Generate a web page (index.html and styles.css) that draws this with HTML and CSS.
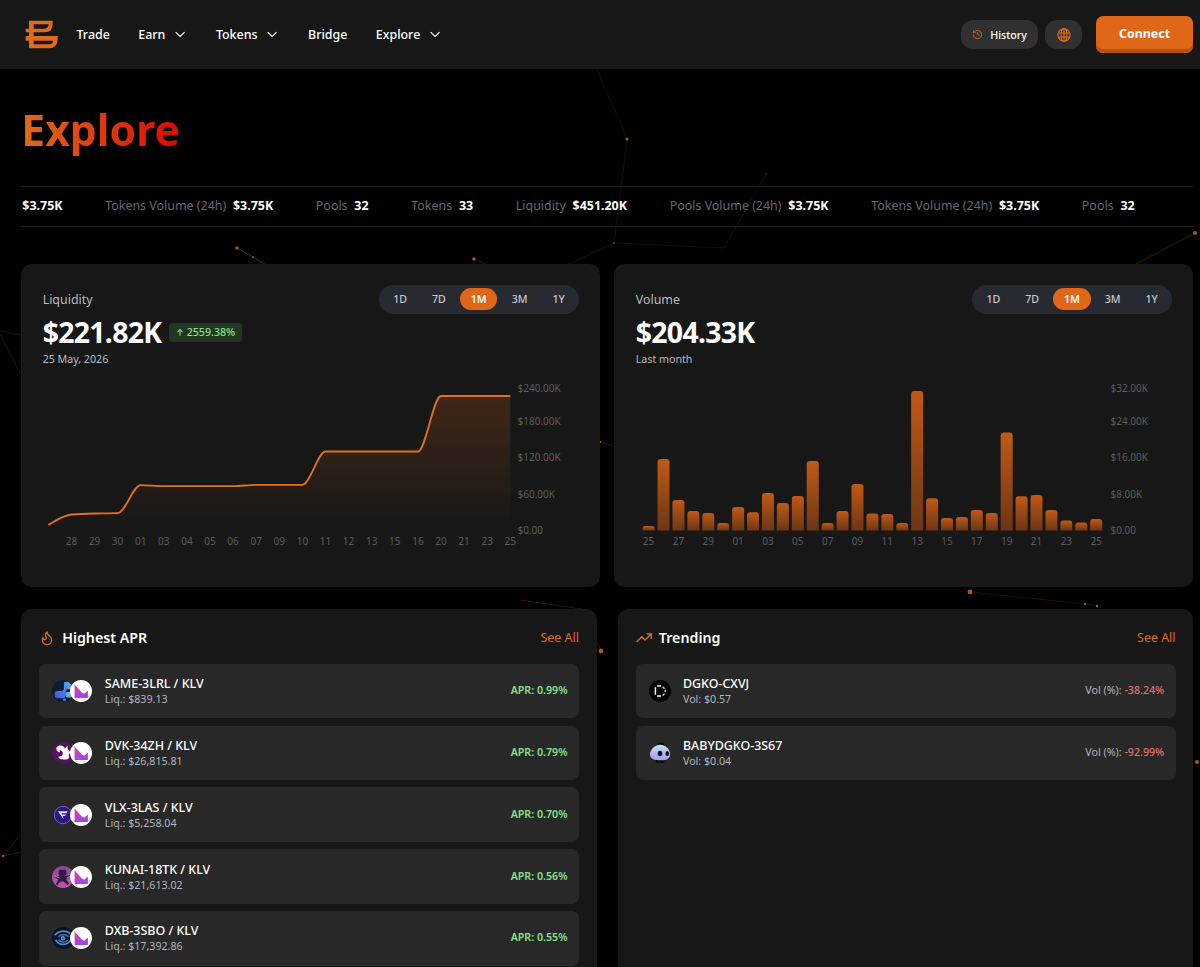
FILE: index.html
```
<!DOCTYPE html>
<html lang="en">
  <head>
    <meta charset="UTF-8" />
    <meta name="viewport" content="width=device-width, initial-scale=1.0" />
    <title>Explore</title>
    <link rel="stylesheet" href="styles.css">
  </head>
  <body>
    <!-- particle network behind the page -->
    <svg class="particles" viewBox="0 0 1200 967" aria-hidden="true">
      <g stroke="#e06a1b" stroke-width="1">
        <path d="M597 69L627 139" opacity=".1" />
        <path d="M627 139L614 243L724 248L766 174" opacity=".12" fill="none" />
        <path d="M237 248L265 264" opacity=".4" />
        <path d="M614 243L560 268" opacity=".12" />
        <path d="M474 259L486 264" opacity=".2" />
        <path d="M1195 233L1136 264" opacity=".25" />
        <path d="M0 331L22 335M0 334L22 378" opacity=".15" />
        <path d="M600 442L616 447" opacity=".2" />
        <path d="M520 600L582 609L601 651" opacity=".2" fill="none" />
        <path d="M970 592L1085 604L1097 606" opacity=".15" fill="none" />
        <path d="M3 856L22 833M3 856L22 852" opacity=".2" />
      </g>
      <g fill="#a9551f">
        <circle cx="627" cy="139" r="1.6" />
        <circle cx="766" cy="174" r=".8" opacity=".5" />
        <circle cx="614" cy="243" r="1" opacity=".5" />
        <circle cx="237" cy="248" r="1.8" />
        <circle cx="253" cy="257" r="1" />
        <circle cx="474" cy="259" r="1.8" />
        <circle cx="1195" cy="233" r="2" />
        <circle cx="600" cy="442" r="1.2" />
        <circle cx="601" cy="651" r="2.4" />
        <circle cx="970" cy="592" r="2.4" />
        <circle cx="1085" cy="604" r="1.2" />
        <circle cx="1097" cy="606" r="1.2" />
        <circle cx="3" cy="856" r="1.3" />
        <circle cx="1197" cy="762" r="2" />
      </g>
    </svg>

    <!-- shared icons -->
    <svg width="0" height="0" class="defs">
      <defs>
        <linearGradient id="klv-fill" x1="0" y1="0" x2="0.4" y2="1">
          <stop offset="0" stop-color="#e6408c" />
          <stop offset="1" stop-color="#a045ee" />
        </linearGradient>
        <linearGradient id="same-fill" x1="1" y1="0" x2="0" y2="1">
          <stop offset="0" stop-color="#53b4ea" />
          <stop offset="1" stop-color="#5048e8" />
        </linearGradient>
        <linearGradient id="kunai-fill" x1="0" y1="0" x2="0" y2="1">
          <stop offset="0" stop-color="#8b4797" />
          <stop offset="1" stop-color="#c553ad" />
        </linearGradient>
        <linearGradient id="baby-fill" x1="0" y1="0" x2="0" y2="1">
          <stop offset="0" stop-color="#bfe4ec" />
          <stop offset="1" stop-color="#a89be6" />
        </linearGradient>
        <linearGradient id="area-fill" x1="0" y1="0" x2="0" y2="1">
          <stop offset="0" stop-color="#e3671a" stop-opacity=".2" />
          <stop offset="1" stop-color="#e3671a" stop-opacity="0" />
        </linearGradient>
        <linearGradient id="bar-fill" x1="0" y1="0" x2="0" y2="1">
          <stop offset="0" stop-color="#c25915" />
          <stop offset="1" stop-color="#6c3614" />
        </linearGradient>
      </defs>
      <symbol id="chevron" viewBox="0 0 16 16">
        <path d="M3 5.8l5 4.8 5-4.8" fill="none" stroke="#fff" stroke-width="1.3" />
      </symbol>
      <symbol id="klv" viewBox="0 0 24 24">
        <circle cx="12" cy="12" r="12" fill="#fff" />
        <path d="M5 5L13 13.6L15.5 15L19.5 11.5V19.5H5Z" fill="url(#klv-fill)" />
      </symbol>
    </svg>

    <header class="navbar">
      <svg class="logo" viewBox="0 0 99 87">
        <path fill="#e06a1b" fill-rule="evenodd" d="M12 2H83V10C83 27 76 37 60 37H26V48H98V55C98 74 90 85 73 85H12V62H2V48H12V37H2V26H12ZM26 13V26H58C67 26 71 20 71 13ZM26 62V73H71C79 73 84 69 85 62Z" />
      </svg>
      <nav class="menu">
        <a>Trade</a>
        <a>Earn <svg class="chevron"><use href="#chevron" /></svg></a>
        <a>Tokens <svg class="chevron"><use href="#chevron" /></svg></a>
        <a>Bridge</a>
        <a>Explore <svg class="chevron"><use href="#chevron" /></svg></a>
      </nav>
      <div class="actions">
        <button class="pill history">
          <svg viewBox="0 0 24 24" class="icon">
            <path d="M3 12a9 9 0 1 0 9-9 9.75 9.75 0 0 0-6.74 2.74L3 8M3 3v5h5M12 7v5l4 2" />
          </svg>
          History
        </button>
        <button class="pill language" aria-label="Language">
          <svg viewBox="0 0 24 24" class="icon">
            <circle cx="12" cy="12" r="10.5" />
            <ellipse cx="12" cy="12" rx="5" ry="10.5" />
            <path d="M12 1.5v21M2.5 8.5h19M2.5 15.5h19" />
          </svg>
        </button>
        <button class="connect">Connect</button>
      </div>
    </header>

    <main>
      <h1>Explore</h1>

      <div class="ticker">
        <div><b>$3.75K</b></div>
        <div>Tokens Volume (24h) <b>$3.75K</b></div>
        <div>Pools <b>32</b></div>
        <div>Tokens <b>33</b></div>
        <div>Liquidity <b>$451.20K</b></div>
        <div>Pools Volume (24h) <b>$3.75K</b></div>
        <div>Tokens Volume (24h) <b>$3.75K</b></div>
        <div>Pools <b>32</b></div>
      </div>

      <section class="charts">
        <div class="card chart-card">
          <div class="chart-head">
            <div>
              <div class="label">Liquidity</div>
              <div class="total">
                $221.82K
                <span class="badge">
                  <svg viewBox="0 0 10 10"><path d="M5 9V1.2M1.8 4.4L5 1.2l3.2 3.2" /></svg>
                  2559.38%
                </span>
              </div>
              <div class="period">25 May, 2026</div>
            </div>
            <div class="range">
              <span>1D</span><span>7D</span><span class="active">1M</span><span>3M</span><span>1Y</span>
            </div>
          </div>
          <svg class="chart" id="liquidity-chart" viewBox="0 0 536 180"></svg>
        </div>

        <div class="card chart-card">
          <div class="chart-head">
            <div>
              <div class="label">Volume</div>
              <div class="total">$204.33K</div>
              <div class="period">Last month</div>
            </div>
            <div class="range">
              <span>1D</span><span>7D</span><span class="active">1M</span><span>3M</span><span>1Y</span>
            </div>
          </div>
          <svg class="chart" id="volume-chart" viewBox="0 0 536 180"></svg>
        </div>
      </section>

      <section class="lists">
        <div class="card list-card">
          <div class="list-head">
            <h2>
              <svg viewBox="0 0 24 24" class="icon flame">
                <path d="M8.5 14.5A2.5 2.5 0 0 0 11 12c0-1.38-.5-2-1-3-1.072-2.143-.224-4.054 2-6 .5 2.5 2 4.9 4 6.5 2 1.6 3 3.5 3 5.5a7 7 0 1 1-14 0c0-1.153.433-2.294 1-3a2.5 2.5 0 0 0 2.5 2.5z" />
              </svg>
              Highest APR
            </h2>
            <a>See All</a>
          </div>
          <div class="row">
            <div class="pair">
              <svg viewBox="0 0 24 24">
                <circle cx="12" cy="12" r="12" fill="#0c1c30" />
                <path d="M13 4q0-2 2-2h2q5 2 5 7v1h-5q-2 0-2 2v3q0 5-4 5H6q-3 0-3-3v-3q0-2 3-2h4q3 0 3-3z" fill="url(#same-fill)" />
                <rect x="15" y="13" width="7" height="6" rx="1.5" fill="#58b0e8" />
                <circle cx="13.5" cy="21.5" r="1.7" fill="#3f7fd8" />
              </svg>
              <svg><use href="#klv" /></svg>
            </div>
            <div class="info"><b>SAME-3LRL / KLV</b><small>Liq.: $839.13</small></div>
            <span class="apr">APR: 0.99%</span>
          </div>
          <div class="row">
            <div class="pair">
              <svg viewBox="0 0 24 24">
                <circle cx="12" cy="12" r="12" fill="#561060" />
                <path d="M5 9C3 3 13 2 14 7l3-3v4c3 1 2 3 3 4l-2 2c2 3 0 6-5 5-4 0-6-1-6-3l4-1c2-3 0-6-3-6 2 2 0 4-3 0z" fill="#fff" />
              </svg>
              <svg><use href="#klv" /></svg>
            </div>
            <div class="info"><b>DVK-34ZH / KLV</b><small>Liq.: $26,815.81</small></div>
            <span class="apr">APR: 0.79%</span>
          </div>
          <div class="row">
            <div class="pair">
              <svg viewBox="0 0 24 24">
                <circle cx="12" cy="12" r="9.5" fill="#32128a" stroke="#776abf" />
                <path d="M6.5 8H17l-1.2 2h-5.3l.6 1.5h4.2L14.2 13h-2.4l.7 3.5z" fill="#e5dcff" />
              </svg>
              <svg><use href="#klv" /></svg>
            </div>
            <div class="info"><b>VLX-3LAS / KLV</b><small>Liq.: $5,258.04</small></div>
            <span class="apr">APR: 0.70%</span>
          </div>
          <div class="row">
            <div class="pair">
              <svg viewBox="0 0 24 24">
                <circle cx="12" cy="12" r="12" fill="url(#kunai-fill)" />
                <path d="M8 4h7l1 5-2 2 5-1 2 1-5 3v2l3 3-2 2-4-4H9l-3 4-2-1 3-5-4-3 5-1-1-3z" fill="#30183e" />
                <path d="M3 11l5 2M16 13l6-3" stroke="#f06bb4" stroke-width="1" />
              </svg>
              <svg><use href="#klv" /></svg>
            </div>
            <div class="info"><b>KUNAI-18TK / KLV</b><small>Liq.: $21,613.02</small></div>
            <span class="apr">APR: 0.56%</span>
          </div>
          <div class="row">
            <div class="pair">
              <svg viewBox="0 0 24 24">
                <circle cx="12" cy="12" r="12" fill="#0a1428" />
                <g fill="none" stroke="#4f8fce" stroke-width="1.8">
                  <path d="M3 9c4-5 11-6 17-2M4 14c3 6 11 7 16 1" />
                  <path d="M7 11c3-4 9-3 11 0M7 14c3 4 8 3 10 0" stroke="#3a6fab" />
                  <circle cx="12" cy="12.3" r="1.5" />
                </g>
              </svg>
              <svg><use href="#klv" /></svg>
            </div>
            <div class="info"><b>DXB-3SBO / KLV</b><small>Liq.: $17,392.86</small></div>
            <span class="apr">APR: 0.55%</span>
          </div>
        </div>

        <div class="card list-card">
          <div class="list-head">
            <h2>
              <svg viewBox="0 0 24 24" class="icon trend">
                <path d="M1 18l7.5-8 5 5L22.500 6.500M16 6h7v7" />
              </svg>
              Trending
            </h2>
            <a>See All</a>
          </div>
          <div class="row">
            <svg class="token" viewBox="0 0 24 24">
              <circle cx="12" cy="12" r="12" fill="#000" />
              <path d="M7 8v8M9 6.500h4M9 17.500h4" stroke="#fff" stroke-width="1.600" />
              <path d="M15 7.500l2 2M17.800 11v2M17 15l-2 2" stroke="#ddd" stroke-width="1.500" />
            </svg>
            <div class="info"><b>DGKO-CXVJ</b><small>Vol: $0.57</small></div>
            <span class="vol">Vol (%): <b>-38.24%</b></span>
          </div>
          <div class="row">
            <svg class="token" viewBox="0 0 24 24">
              <ellipse cx="13" cy="3" rx="4" ry="2.500" fill="#0b0b12" />
              <path d="M7 19h11l-2 4h-3l-1-2-1 2H8z" fill="#08080e" />
              <path d="M12 3C18 3 23 8 23 13.500S18 20 12 20 1 18 1 13.500 6 3 12 3z" fill="url(#baby-fill)" />
              <ellipse cx="12" cy="12.500" rx="2.500" ry="3" fill="#0c0a2c" />
              <ellipse cx="20" cy="12.500" rx="2" ry="2.800" fill="#0c0a2c" />
            </svg>
            <div class="info"><b>BABYDGKO-3S67</b><small>Vol: $0.04</small></div>
            <span class="vol">Vol (%): <b>-92.99%</b></span>
          </div>
        </div>
      </section>
    </main>

    <script>
      const BASE = 155.5; // y of the zero line

      function label(x, y, text, anchor) {
        return `<text x="${x}" y="${y}" text-anchor="${anchor}">${text}</text>`;
      }

      function yAxis(labels) {
        const rows = [16.5, 50, 86.3, 122.6, 159];
        return labels.map((t, i) => label(474.5, rows[i], t, 'start')).join('');
      }

      function drawLiquidity() {
        const ys = [150, 139.5, 138.5, 138.2, 110.2, 111.2, 111.2, 111.2, 111.2, 109.8, 109.8,
          109.8, 76.5, 76.5, 76.5, 76.5, 76.5, 21, 21, 21, 21];
        const days = ['28', '29', '30', '01', '03', '04', '05', '06', '07', '09', '10', '11',
          '12', '13', '15', '16', '20', '21', '23', '25'];
        const step = 23.1;
        const start = 5.3;

        // monotone curve: flat tangents everywhere except on a steady slope
        const slope = ys.map((y, i) => {
          if (i === 0) return (ys[1] - y) / step * 1.3;
          if (i === ys.length - 1) return 0;
          const a = (y - ys[i - 1]) / step;
          const b = (ys[i + 1] - y) / step;
          return a * b <= 0 ? 0 : 2 * a * b / (a + b);
        });
        let line = `M${start} ${ys[0]}`;
        for (let i = 1; i < ys.length; i++) {
          const x0 = start + (i - 1) * step;
          const x1 = x0 + step;
          const k = step / 3;
          line += `C${x0 + k} ${ys[i - 1] + slope[i - 1] * k} ${x1 - k} ${ys[i] - slope[i] * k} ${x1} ${ys[i]}`;
        }
        const end = start + step * (ys.length - 1);
        document.getElementById('liquidity-chart').innerHTML =
          `<path d="${line}V${BASE}H${start}Z" fill="url(#area-fill)" />` +
          `<path d="${line}" fill="none" stroke="#e27023" stroke-width="1.8" />` +
          days.map((d, i) => label(start + (i + 1) * step, 170, d, 'middle')).join('') +
          yAxis(['$240.00K', '$180.00K', '$120.00K', '$60.00K', '$0.00']) +
          `<title>${end ? 'Liquidity' : ''}</title>`;
      }

      function drawVolume() {
        const heights = [4.5, 71.5, 30.5, 19.5, 17.5, 7.5, 23.5, 18.3, 37.5, 27.5, 34.5, 69.5,
          7.5, 19.5, 46.5, 17, 16.5, 7.5, 139.5, 32.3, 12.5, 13.5, 20.5, 17.5, 98,
          34.3, 35.5, 20.5, 10, 8, 11.5];
        const days = ['25', '27', '29', '01', '03', '05', '07', '09', '11', '13', '15', '17',
          '19', '21', '23', '25'];
        const step = 14.92;
        const w = 12;
        document.getElementById('volume-chart').innerHTML =
          heights.map((h, i) => {
            const x = 6.6 + i * step;
            const r = Math.min(3, h / 2);
            return `<path fill="url(#bar-fill)" d="M${x} ${BASE}v${r - h}q0 ${-r} ${r} ${-r}h${w - 2 * r}q${r} 0 ${r} ${r}V${BASE}Z" />`;
          }).join('') +
          days.map((d, i) => label(12.6 + i * step * 2, 170, d, 'middle')).join('') +
          yAxis(['$32.00K', '$24.00K', '$16.00K', '$8.00K', '$0.00']);
      }

      drawLiquidity();
      drawVolume();
    </script>
  </body>
</html>
```

FILE: styles.css
```
html {
  font-size: 14.22px;
}
* {
  box-sizing: border-box;
}
body {
  margin: 0;
  height: 967px;
  overflow: hidden;
  background: #000;
  color: #fff;
  font-family: "Noto Sans", sans-serif;
  font-size: 0.875rem;
  line-height: 1.25rem;
}
svg {
  flex: none;
}
.defs {
  position: absolute;
}
.particles {
  position: absolute;
  top: 0;
  left: 0;
  width: 1200px;
  height: 967px;
  z-index: -1;
}
.icon {
  fill: none;
  stroke: #e06a1b;
  stroke-width: 2;
}

/* header */
.navbar {
  display: flex;
  align-items: center;
  height: 69px;
  padding: 0 7px 0 25px;
  background: #171717;
}
.logo {
  width: 33px;
  height: 29px;
}
.menu {
  display: flex;
  gap: 2rem;
  margin-left: 18.5px;
  font-weight: 500;
}
.menu a {
  display: flex;
  align-items: center;
  gap: 0.55rem;
}
.chevron {
  width: 1rem;
  height: 1rem;
}
.actions {
  display: flex;
  align-items: center;
  margin-left: auto;
}
.pill {
  display: flex;
  align-items: center;
  justify-content: center;
  gap: 0.5rem;
  height: 29px;
  border: 0;
  border-radius: 12px;
  background: #303030;
  color: #fff;
  font: 500 0.75rem "Noto Sans", sans-serif;
}
.history {
  width: 77px;
  margin-right: 7px;
}
.history .icon {
  width: 11px;
  height: 11px;
}
.language {
  width: 37px;
  margin-right: 14px;
}
.language .icon {
  width: 14px;
  height: 14px;
}
.connect {
  width: 97px;
  height: 37px;
  padding: 0 0 3px;
  border: 0;
  border-radius: 7px;
  background: #e06718;
  box-shadow: inset 0 -4px 0 #b35213;
  color: #fff;
  font: 700 0.875rem "Noto Sans", sans-serif;
}

main {
  padding: 0 6.7px 0 21.3px;
}
h1 {
  width: fit-content;
  margin: 30px 0 26.500px;
  background: linear-gradient(90deg, #e06a1b, #dc0a00);
  background-clip: text;
  -webkit-background-clip: text;
  color: transparent;
  font-size: 3rem;
  line-height: 60px;
}

/* stats strip */
.ticker {
  display: flex;
  align-items: center;
  gap: 3rem;
  height: 41.500px;
  padding-left: 1px;
  border-top: 1px solid #1c1c1c;
  border-bottom: 1px solid #1c1c1c;
  overflow: hidden;
  color: #656575;
  white-space: nowrap;
}
.ticker b {
  margin-left: 0.25rem;
  color: #fff;
}
.ticker div:first-child b {
  margin-left: 0;
}

.card {
  border-radius: 10.5px;
  background: #171717;
}

/* charts */
.charts {
  display: grid;
  grid-template-columns: 1fr 1fr;
  gap: 1rem;
  margin-top: 36.5px;
}
.chart-card {
  height: 323.5px;
  padding: 1.5rem;
}
.chart-head {
  display: flex;
  justify-content: space-between;
  align-items: flex-start;
}
.label {
  margin-top: 6px;
  color: #b9b9c0;
}
.total {
  display: flex;
  align-items: center;
  gap: 0.5rem;
  margin-top: 6px;
  font-size: 2rem;
  font-weight: 700;
  line-height: 2.5rem;
  letter-spacing: -0.025em;
}
.badge {
  display: flex;
  align-items: center;
  gap: 3px;
  padding: 0 0.5rem;
  border-radius: 4px;
  background: #233523;
  color: #86e08a;
  font-size: 0.75rem;
  font-weight: 500;
  line-height: 19px;
  letter-spacing: 0;
}
.badge svg {
  width: 8px;
  height: 9px;
  fill: none;
  stroke: currentColor;
  stroke-width: 1.3;
}
.period {
  margin-top: 1px;
  color: #b9b9c0;
  font-size: 0.75rem;
}
.range {
  display: flex;
  gap: 0.25rem;
  padding: 3.5px;
  border-radius: 15px;
  background: #282a32;
  color: #c6c6cc;
  font-size: 0.75rem;
  font-weight: 500;
  line-height: 22px;
}
.range span {
  padding: 0 0.75rem;
  border-radius: 11px;
}
.range .active {
  background: #e06718;
  color: #fff;
  font-weight: 600;
}
.chart {
  display: block;
  width: 536px;
  height: 180px;
  margin-top: 6px;
}
.chart text {
  fill: #5c5c5c;
  font-size: 10px;
}

/* lists */
.lists {
  display: grid;
  grid-template-columns: 1fr 1fr;
  gap: 1.5rem;
  margin-top: 22px;
}
.list-card {
  height: 400px;
  padding: 1.25rem;
}
.list-head {
  display: flex;
  justify-content: space-between;
  align-items: center;
  height: 23px;
  margin-bottom: 14px;
}
.list-head a {
  color: #e06a1b;
}
h2 {
  display: flex;
  align-items: center;
  gap: 0.5rem;
  margin: 0;
  font-size: 1rem;
  font-weight: 600;
}
.flame,
.trend {
  width: 16px;
  height: 16px;
}
.row {
  display: flex;
  align-items: center;
  height: 54.700px;
  margin-bottom: 0.5rem;
  padding: 0 0.8rem 0 0.9rem;
  border-radius: 7px;
  background: #282828;
}
.pair {
  display: flex;
}
.pair svg,
.token {
  width: 22px;
  height: 22px;
}
.pair svg + svg {
  margin-left: -3.5px;
}
.info {
  display: flex;
  flex-direction: column;
  flex: 1;
  margin-left: 0.875rem;
}
.info b {
  font-weight: 500;
  line-height: 17px;
}
.info small {
  color: #b4b4bc;
  font-size: 0.75rem;
  line-height: 15px;
}
.apr {
  color: #86e08a;
  font-size: 0.75rem;
  font-weight: 600;
}
.vol {
  color: #b4b4bc;
  font-size: 0.75rem;
}
.vol b {
  color: #e5706c;
  font-weight: 500;
}
```
